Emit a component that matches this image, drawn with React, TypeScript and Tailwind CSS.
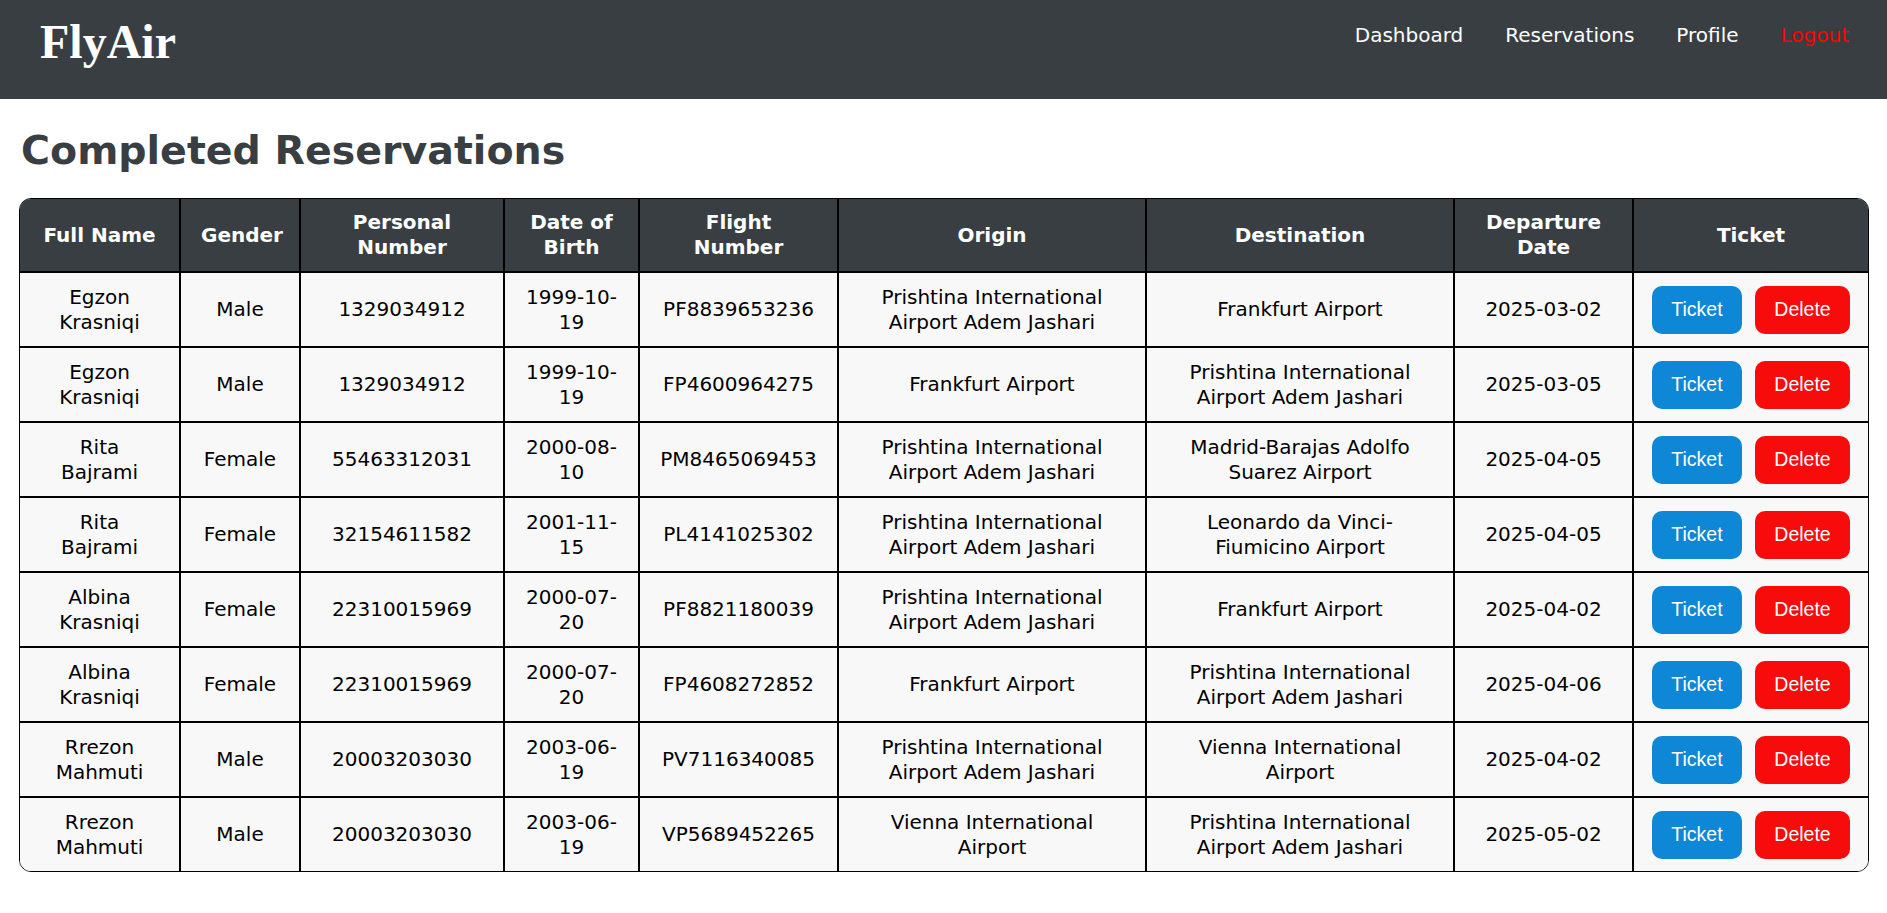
import React from "react";

type Row = {
  name: string;
  gender: string;
  pn: string;
  dob: string;
  flight: string;
  origin: string;
  dest: string;
  dep: string;
};

const PR = "Prishtina International Airport Adem Jashari";

const rows: Row[] = [
  { name: "Egzon Krasniqi", gender: "Male", pn: "1329034912", dob: "1999-10-19", flight: "PF8839653236", origin: PR, dest: "Frankfurt Airport", dep: "2025-03-02" },
  { name: "Egzon Krasniqi", gender: "Male", pn: "1329034912", dob: "1999-10-19", flight: "FP4600964275", origin: "Frankfurt Airport", dest: PR, dep: "2025-03-05" },
  { name: "Rita Bajrami", gender: "Female", pn: "55463312031", dob: "2000-08-10", flight: "PM8465069453", origin: PR, dest: "Madrid-Barajas Adolfo Suarez Airport", dep: "2025-04-05" },
  { name: "Rita Bajrami", gender: "Female", pn: "32154611582", dob: "2001-11-15", flight: "PL4141025302", origin: PR, dest: "Leonardo da Vinci-Fiumicino Airport", dep: "2025-04-05" },
  { name: "Albina Krasniqi", gender: "Female", pn: "22310015969", dob: "2000-07-20", flight: "PF8821180039", origin: PR, dest: "Frankfurt Airport", dep: "2025-04-02" },
  { name: "Albina Krasniqi", gender: "Female", pn: "22310015969", dob: "2000-07-20", flight: "FP4608272852", origin: "Frankfurt Airport", dest: PR, dep: "2025-04-06" },
  { name: "Rrezon Mahmuti", gender: "Male", pn: "20003203030", dob: "2003-06-19", flight: "PV7116340085", origin: PR, dest: "Vienna International Airport", dep: "2025-04-02" },
  { name: "Rrezon Mahmuti", gender: "Male", pn: "20003203030", dob: "2003-06-19", flight: "VP5689452265", origin: "Vienna International Airport", dest: PR, dep: "2025-05-02" },
];

const headers: { label: string; w: string }[] = [
  { label: "Full Name", w: "w-[161px]" },
  { label: "Gender", w: "w-[120px]" },
  { label: "Personal Number", w: "w-[204px]" },
  { label: "Date of Birth", w: "w-[135px]" },
  { label: "Flight Number", w: "w-[199px]" },
  { label: "Origin", w: "w-[308px]" },
  { label: "Destination", w: "w-[308px]" },
  { label: "Departure Date", w: "w-[179px]" },
  { label: "Ticket", w: "w-[234px]" },
];

export default function App() {
  return (
    <div className="min-h-screen bg-white" style={{ fontFamily: '"DejaVu Sans", Verdana, sans-serif' }}>
      <header className="flex h-[99px] items-start justify-between bg-[#393e42] pl-[40px] pr-[38px]">
        <div
          className="pt-[14px] text-[48px] font-bold leading-[55px] text-white"
          style={{ fontFamily: '"Liberation Serif", "Times New Roman", serif' }}
        >
          FlyAir
        </div>
        <nav className="flex gap-[42px] pt-[24px] text-[20px] leading-[23px]">
          <a className="text-white">Dashboard</a>
          <a className="text-white">Reservations</a>
          <a className="text-white">Profile</a>
          <a className="text-[#ff0000]">Logout</a>
        </nav>
      </header>

      <main className="px-[19px] pt-[28px]">
        <h1 className="mb-[24px] pl-[2px] text-[39.5px] font-bold leading-[47px] text-[#393e42]">
          Completed Reservations
        </h1>

        <div className="w-[1850px] overflow-hidden rounded-[12px] border border-black">
          <table className="w-full table-fixed border-separate border-spacing-0 text-center text-[20px]">
            <thead>
              <tr>
                {headers.map((h, i) => (
                  <th
                    key={h.label}
                    className={`${h.w} border-b-2 border-black bg-[#393e42] px-5 py-[11px] align-middle font-bold leading-[25px] text-white ${
                      i < headers.length - 1 ? "border-r-2" : ""
                    }`}
                  >
                    {h.label}
                  </th>
                ))}
              </tr>
            </thead>
            <tbody>
              {rows.map((r, ri) => {
                const last = ri === rows.length - 1;
                const cells = [r.name, r.gender, r.pn, r.dob, r.flight, r.origin, r.dest, r.dep];
                return (
                  <tr key={ri}>
                    {cells.map((c, ci) => (
                      <td
                        key={ci}
                        className={`border-r-2 border-black bg-[#f8f8f8] px-5 py-[12px] align-middle leading-[24.5px] text-black ${
                          last ? "" : "border-b-2"
                        }`}
                      >
                        {c}
                      </td>
                    ))}
                    <td className={`border-black bg-[#f8f8f8] px-0 py-[12px] align-middle ${last ? "" : "border-b-2"}`}>
                      <div
                        className="flex justify-center gap-[13px]"
                        style={{ fontFamily: '"Liberation Sans", Arial, sans-serif' }}
                      >
                        <button className="h-[48px] w-[90px] rounded-[10px] bg-[#0e87d6] text-[19.5px] text-white">
                          Ticket
                        </button>
                        <button className="h-[48px] w-[95px] rounded-[10px] bg-[#f80b0b] text-[19.5px] text-white">
                          Delete
                        </button>
                      </div>
                    </td>
                  </tr>
                );
              })}
            </tbody>
          </table>
        </div>
      </main>
    </div>
  );
}
